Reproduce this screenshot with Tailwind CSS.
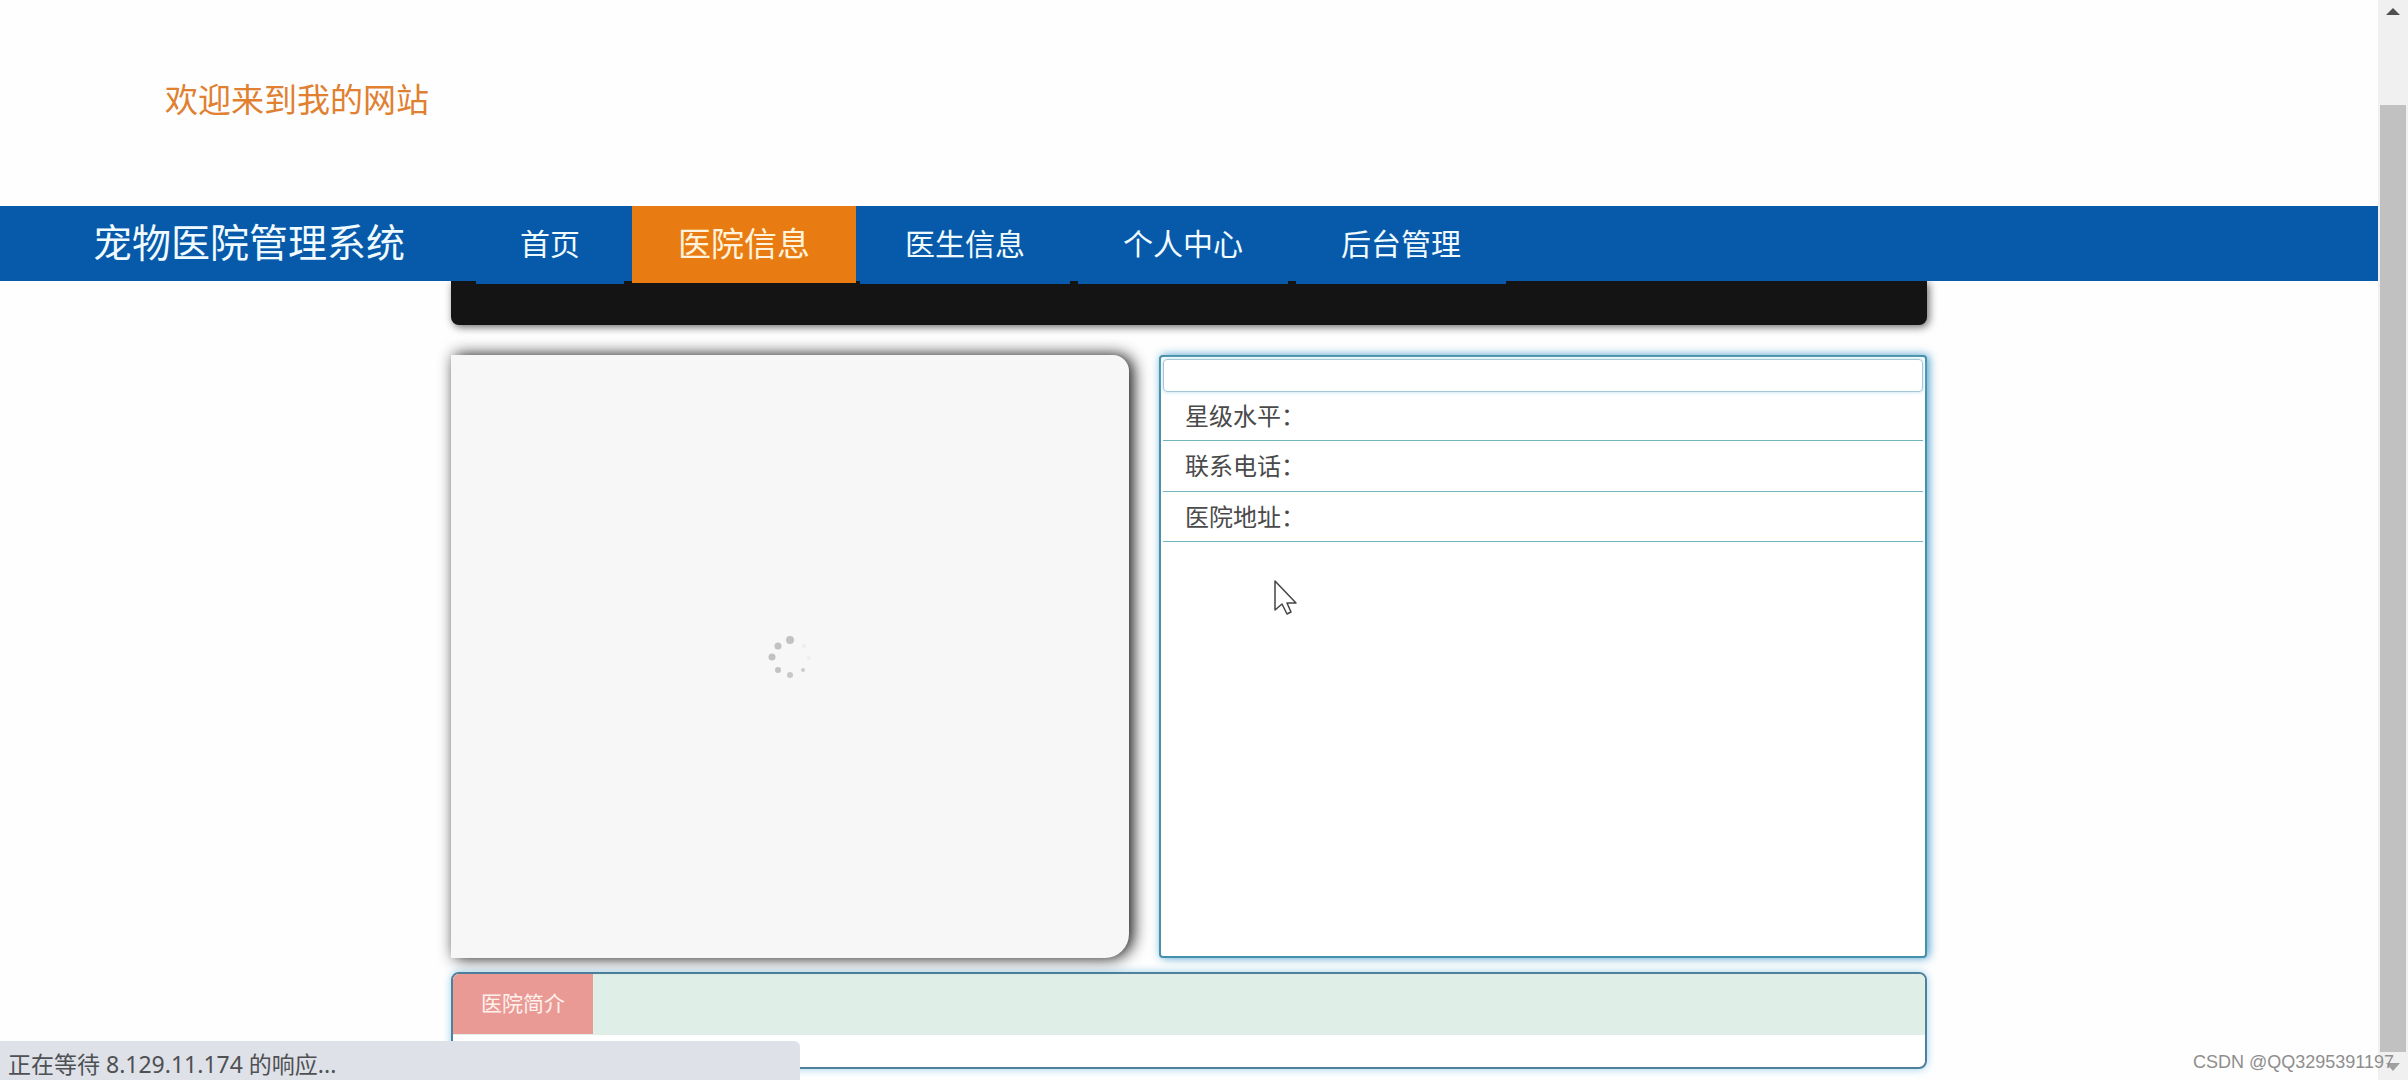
<!DOCTYPE html>
<html lang="zh-CN">
<head>
<meta charset="utf-8">
<meta name="viewport" content="width=device-width, initial-scale=1">
<title>宠物医院管理系统</title>
<script src="https://cdn.jsdelivr.net/npm/@tailwindcss/browser@4"></script>
</head>
<body class="relative flex min-h-screen overflow-hidden bg-[#fefefe] font-['Noto_Sans','Noto_Sans_CJK_SC',sans-serif]">
  <div class="min-w-0 flex-1">
    <header class="flex h-[206px] items-start pt-[76px] pl-[165px]">
      <p class="text-[33px] leading-[48px] text-[#e08030]">欢迎来到我的网站</p>
    </header>

    <nav class="relative z-10 flex h-[75px] items-start gap-2 bg-[#0759aa] text-[30px] text-[#f0fbff]">
      <a href="#" class="w-[468px] shrink-0 pl-[93px] text-[39px] leading-[72px]">宠物医院管理系统</a>
      <a href="#" class="h-[78px] w-[148px] shrink-0 bg-[#0759aa] text-center leading-[76px]">首页</a>
      <a href="#" aria-current="page" class="-mr-1 h-[77px] w-[224px] shrink-0 bg-[#e97b13] text-center text-[33px] leading-[76px] text-[#fff3dc]">医院信息</a>
      <a href="#" class="h-[78px] w-[210px] shrink-0 bg-[#0759aa] text-center leading-[76px]">医生信息</a>
      <a href="#" class="h-[78px] w-[210px] shrink-0 bg-[#0759aa] text-center leading-[76px]">个人中心</a>
      <a href="#" class="h-[78px] w-[210px] shrink-0 bg-[#0759aa] text-center leading-[76px]">后台管理</a>
    </nav>

    <main class="mx-auto w-full max-w-[1476px]">
      <div class="h-[44px] rounded-b-lg bg-[#141414] shadow-[2px_2px_8px_rgba(0,0,0,0.6)]"></div>

      <div class="mt-[30px] grid grid-cols-[678fr_768fr] gap-[30px]">
        <!-- picture carousel, still loading -->
        <section aria-label="加载中" class="flex min-h-[603px] items-center justify-center rounded-tr-2xl rounded-br-3xl bg-[#f7f7f7] shadow-[4px_0_16px_rgba(0,0,0,0.95)]">
          <svg class="h-[46px] w-[46px]" viewBox="0 0 46 46" fill="#c2c2c2">
            <circle cx="23" cy="6" r="4"/>
            <circle cx="11" cy="12" r="3.5"/>
            <circle cx="5" cy="23" r="3.5"/>
            <circle cx="11" cy="36" r="3"/>
            <circle cx="23" cy="41" r="3" fill="#c8c8c8"/>
            <circle cx="36" cy="36" r="2" fill="#cccccc"/>
            <circle cx="42" cy="24" r="2" fill="#eeeeee"/>
            <circle cx="37" cy="12" r="2" fill="#eeeeee"/>
          </svg>
        </section>

        <section class="rounded-sm border-2 border-[#4590aa] bg-white px-[2px] pt-[2px] text-[24px] text-[#4a4a4a] shadow-[2px_0_10px_rgba(30,135,190,0.8)]">
          <h2 class="h-[33px] rounded-sm border border-[#a4c8d6] shadow-[0_0_4px_#b9dcea]"></h2>
          <dl>
            <div class="flex h-[49px] border-b border-[#6fb5be] px-[22px] leading-[48px]"><dt>星级水平：</dt><dd></dd></div>
            <div class="flex h-[51px] border-b border-[#6fb5be] px-[22px] leading-[50px]"><dt>联系电话：</dt><dd></dd></div>
            <div class="flex h-[50px] border-b border-[#6fb5be] px-[22px] leading-[50px]"><dt>医院地址：</dt><dd></dd></div>
          </dl>
        </section>
      </div>

      <section class="mt-[14px] h-[97px] overflow-hidden rounded-lg border-2 border-[#4e809c] bg-white shadow-[0_0_8px_rgba(90,180,225,0.6)]">
        <div class="flex h-[61px] items-start bg-[#dfefe7]">
          <button type="button" class="h-[60px] w-[140px] bg-[#ea9a95] text-[21px] text-[#fff1ec]">医院简介</button>
        </div>
      </section>
    </main>
  </div>

  <!-- window scroll bar -->
  <div class="flex w-[30px] shrink-0 flex-col items-center bg-[#f0f0f0]">
    <svg class="mt-2 mb-[90px] h-[7px] w-[14px]" viewBox="0 0 14 7"><path d="M7 0L14 7H0Z" fill="#505050"/></svg>
    <div class="w-[26px] flex-1 bg-[#c1c1c1]"></div>
    <svg class="mt-[11px] mb-[9px] h-[8px] w-[14px]" viewBox="0 0 14 8"><path d="M0 0H14L7 8Z" fill="#a0a0a0"/></svg>
  </div>

  <!-- browser status bubble -->
  <div class="absolute bottom-0 left-0 z-20 h-[39px] w-[800px] overflow-hidden rounded-tr-md bg-[#dee1e7] pt-[8px] pl-[8px] text-[23px] leading-[31px] text-[#4e5054]">正在等待 8.129.11.174 的响应...</div>
  <p class="absolute right-[14px] bottom-[6px] z-20 font-['Liberation_Sans',sans-serif] text-[18px] leading-[24px] text-[#8e8e8e]">CSDN @QQ3295391197</p>

  <!-- mouse pointer -->
  <svg class="absolute top-[579px] left-[1273px] z-20 h-[37px] w-[25px]" viewBox="0 0 25 37" fill="#fff" stroke="#444" stroke-width="1.5" stroke-linejoin="round"><path d="M2 2V31L9 25L14 35L18 33L14 24H23Z"/></svg>
</body>
</html>
